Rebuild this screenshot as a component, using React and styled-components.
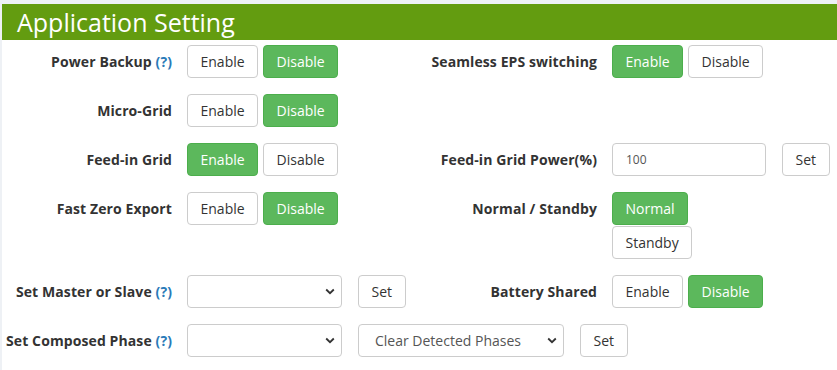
import React from "react";
import styled, { createGlobalStyle } from "styled-components";

const Global = createGlobalStyle`
  html, body { margin: 0; padding: 0; background: #eef1f5; }
  body { font-family: "Segoe UI", "Open Sans", "Liberation Sans", sans-serif; color: #333; }
  * { box-sizing: border-box; }
`;

const Panel = styled.div`
  margin: 4px 0 0 2px;
  background: #fff;
  min-height: 366px;
`;

const Header = styled.div`
  height: 36px;
  background: #639c10;
  color: #fff;
  font-size: 25px;
  line-height: 36px;
  padding-left: 15px;
  white-space: nowrap;
`;

const Body = styled.div`
  padding-top: 5px;
  display: flex;
  flex-direction: column;
  gap: 16px;
`;

const Row = styled.div`
  display: flex;
  align-items: flex-start;
`;

const Half = styled.div`
  width: 425px;
  flex: none;
  display: flex;
  align-items: flex-start;
`;

const Label = styled.div`
  width: 185px;
  flex: none;
  padding-right: 15px;
  text-align: right;
  font-weight: 700;
  font-size: 14px;
  line-height: 33px;
  white-space: nowrap;
  letter-spacing: 0.1px;
`;

const Help = styled.span`
  color: #2a7ab8;
`;

const Controls = styled.div`
  display: flex;
  align-items: flex-start;
  gap: ${(p) => p.$gap ?? 5}px;
`;

const Stack = styled.div`
  display: flex;
  flex-direction: column;
  align-items: flex-start;
  gap: 1px;
`;

const Btn = styled.button`
  height: 33px;
  padding: 0 12.5px;
  font-family: inherit;
  font-size: 14px;
  border-radius: 4px;
  border: 1px solid ${(p) => (p.$on ? "#4cae4c" : "#ccc")};
  background: ${(p) => (p.$on ? "#5cb85c" : "#fff")};
  color: ${(p) => (p.$on ? "#fff" : "#333")};
  white-space: nowrap;
  cursor: pointer;
`;

const Input = styled.input`
  width: ${(p) => p.$w}px;
  height: 33px;
  border: 1px solid #ccc;
  border-radius: 4px;
  padding: 0 13px;
  font-family: inherit;
  font-size: 12px;
  color: #555;
`;

const SelectWrap = styled.div`
  position: relative;
  width: ${(p) => p.$w}px;
  height: 33px;
`;

const Select = styled.select`
  appearance: none;
  width: 100%;
  height: 100%;
  border: 1px solid #ccc;
  border-radius: 4px;
  padding: 0 28px 0 16px;
  background: #fff;
  font-family: inherit;
  font-size: 14px;
  color: #555;
`;

const Chevron = styled.svg`
  position: absolute;
  right: 7px;
  top: 13px;
  width: 10px;
  height: 7px;
  pointer-events: none;
`;

const Dropdown = ({ w, children }) => (
  <SelectWrap $w={w}>
    <Select defaultValue="">{children}</Select>
    <Chevron viewBox="0 0 10 7">
      <path d="M1.2 1.5 L5 5.2 L8.8 1.5" fill="none" stroke="#333" strokeWidth="1.8" />
    </Chevron>
  </SelectWrap>
);

const Toggle = ({ on }) => (
  <Controls>
    <Btn $on={on}>Enable</Btn>
    <Btn $on={!on}>Disable</Btn>
  </Controls>
);

export default function App() {
  return (
    <>
      <Global />
      <Panel>
        <Header>Application Setting</Header>
        <Body>
          <Row>
            <Half>
              <Label>
                Power Backup <Help>(?)</Help>
              </Label>
              <Toggle on={false} />
            </Half>
            <Half>
              <Label>Seamless EPS switching</Label>
              <Toggle on={true} />
            </Half>
          </Row>
          <Row>
            <Half>
              <Label>Micro-Grid</Label>
              <Toggle on={false} />
            </Half>
          </Row>
          <Row>
            <Half>
              <Label>Feed-in Grid</Label>
              <Toggle on={true} />
            </Half>
            <Half>
              <Label>Feed-in Grid Power(%)</Label>
              <Controls $gap={16}>
                <Input $w={154} defaultValue="100" />
                <Btn>Set</Btn>
              </Controls>
            </Half>
          </Row>
          <Row>
            <Half>
              <Label>Fast Zero Export</Label>
              <Toggle on={false} />
            </Half>
            <Half>
              <Label>Normal / Standby</Label>
              <Stack>
                <Btn $on>Normal</Btn>
                <Btn>Standby</Btn>
              </Stack>
            </Half>
          </Row>
          <Row>
            <Half>
              <Label>
                Set Master or Slave <Help>(?)</Help>
              </Label>
              <Controls $gap={16}>
                <Dropdown w={155}>
                  <option value=""></option>
                  <option value="m">Master</option>
                  <option value="s">Slave</option>
                </Dropdown>
                <Btn>Set</Btn>
              </Controls>
            </Half>
            <Half>
              <Label>Battery Shared</Label>
              <Toggle on={false} />
            </Half>
          </Row>
          <Row>
            <Half>
              <Label>
                Set Composed Phase <Help>(?)</Help>
              </Label>
              <Controls $gap={16}>
                <Dropdown w={155}>
                  <option value=""></option>
                </Dropdown>
                <Dropdown w={206}>
                  <option value="">Clear Detected Phases</option>
                </Dropdown>
                <Btn>Set</Btn>
              </Controls>
            </Half>
          </Row>
        </Body>
      </Panel>
    </>
  );
}
